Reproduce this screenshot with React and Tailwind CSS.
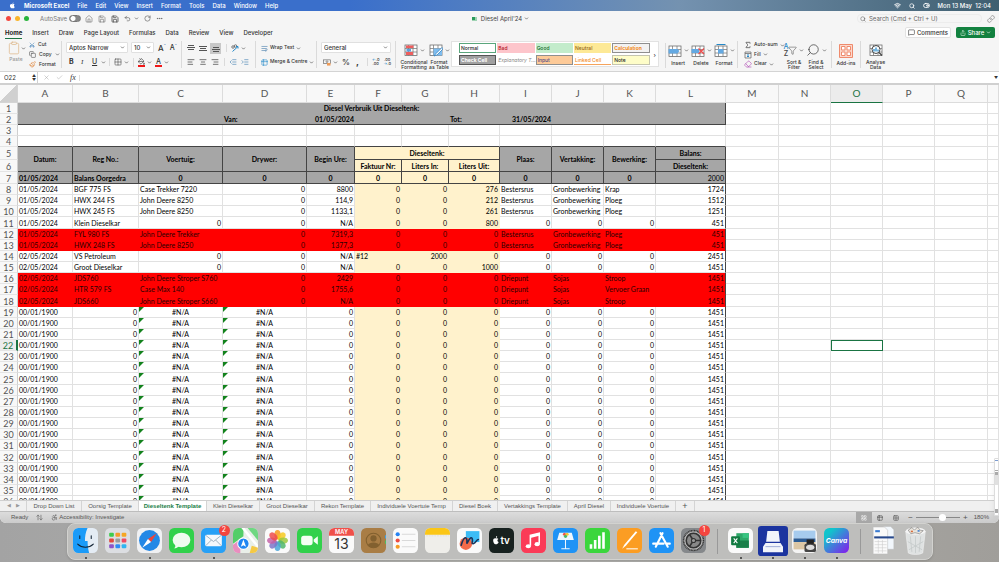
import { useState } from 'react';
import {
  ArrowUpDown, Accessibility, ChevronDown, Clipboard, Copy, Ellipsis, Eraser, Grid2x2, House,
  IndentDecrease, IndentIncrease, LayoutGrid, MessageSquare, PaintBucket, Paintbrush, RotateCw,
  Save, Scissors, Search, Share, Sigma, Table2, TextAlignCenter, TextAlignEnd, TextAlignStart, Undo2,
  Wifi, WrapText, X, Check, Funnel, ToggleRight, Link,
} from 'lucide-react';

const COLS = [
  ['A', 'w-[55px]'], ['B', 'w-[66px]'], ['C', 'w-[84px]'], ['D', 'w-[84px]'], ['E', 'w-[48px]'],
  ['F', 'w-[47px]'], ['G', 'w-[47px]'], ['H', 'w-[51px]'], ['I', 'w-[52px]'], ['J', 'w-[52px]'],
  ['K', 'w-[52px]'], ['L', 'w-[70px]'], ['M', 'w-[53px]'], ['N', 'w-[52px]'], ['O', 'w-[52px]'],
  ['P', 'w-[52px]'], ['Q', 'w-[53px]'], ['', ''],
];

const ENTRIES = [
  ['01/05/2024', 'BGF 775 FS', 'Case Trekker 7220', '0', '8800', '0', '0', '276', 'Bestersrus', 'Gronbewerking', 'Krap', '1724'],
  ['01/05/2024', 'HWX 244 FS', 'John Deere 8250', '0', '114,9', '0', '0', '212', 'Bestersrus', 'Gronbewerking', 'Ploeg', '1512'],
  ['01/05/2024', 'HWX 245 FS', 'John Deere 8250', '0', '1133,1', '0', '0', '261', 'Bestersrus', 'Gronbewerking', 'Ploeg', '1251'],
  ['01/05/2024', 'Klein Dieselkar', '0', '0', 'N/A', '0', '0', '800', '0', '0', '0', '451'],
  ['01/05/2024', 'FYL 980 FS', 'John Deere Trekker', '0', '7319,3', '0', '0', '0', 'Bestersrus', 'Gronbewerking', 'Ploeg', '451'],
  ['01/05/2024', 'HWX 248 FS', 'John Deere 8250', '0', '1377,3', '0', '0', '0', 'Bestersrus', 'Gronbewerking', 'Ploeg', '451'],
  ['02/05/2024', 'VS Petroleum', '0', '0', 'N/A', '#12', '2000', '0', '0', '0', '0', '2451'],
  ['02/05/2024', 'Groot Dieselkar', '0', '0', 'N/A', '0', '0', '1000', '0', '0', '0', '1451'],
  ['02/05/2024', 'JDS760', 'John Deere Stroper S760', '0', '2429', '0', '0', '0', 'Driepunt', 'Sojas', 'Stroop', '1451'],
  ['02/05/2024', 'HTR 579 FS', 'Case Max 140', '0', '1755,6', '0', '0', '0', 'Driepunt', 'Sojas', 'Vervoer Graan', '1451'],
  ['02/05/2024', 'JDS660', 'John Deere Stroper S660', '0', 'N/A', '0', '0', '0', 'Driepunt', 'Sojas', 'Stroop', '1451'],
];
const EMPTY = ['00/01/1900', '0', '#N/A', '#N/A', '0', '0', '0', '0', '0', '0', '0', '1451'];
const ROWS = [...ENTRIES, ...Array.from({ length: 18 }, () => EMPTY)];
const RED_ROWS = [12, 13, 16, 17, 18];

const SHEETS = [
  ['Drop Down List', 'w-[55px]'], ['Oorsig Template', 'w-[57px]'], ['Dieseltenk Template', 'w-[68px]'],
  ['Klein Dieselkar', 'w-[53px]'], ['Groot Dieselkar', 'w-[55px]'], ['Rekon Template', 'w-[56px]'],
  ['Individuele Voertuie Temp', 'w-[82px]'], ['Diesel Boek', 'w-[45px]'], ['Vertakkings Template', 'w-[70px]'],
  ['April Diesel', 'w-[43px]'], ['Individuele Voertuie', 'w-[65px]'],
];

const Chev = () => <ChevronDown size={5} strokeWidth={3} className="shrink-0 text-[#444]" />;

const MenuBar = () => (
  <header className="flex h-[11px] shrink-0 items-center bg-linear-to-r from-[#3a6fcb] from-35% via-[#7492b0] via-68% to-[#3f5f70] pr-2 pl-[9px] text-[6px] font-medium text-white">
    <svg viewBox="0 0 24 24" className="mr-2 size-[7px]" fill="currentColor">
      <path d="M17 12.500c0-2.600 2.100-3.900 2.200-4-1.200-1.800-3.100-2-3.700-2-1.600-.2-3.100.9-3.900.9s-2-.9-3.300-.9C6.500 6.600 5 7.500 4.100 9c-1.800 3.100-.5 7.700 1.300 10.200.9 1.200 1.900 2.600 3.200 2.600 1.300-.1 1.800-.8 3.300-.8s2 .8 3.300.8c1.400 0 2.300-1.200 3.100-2.500 1-1.400 1.400-2.800 1.400-2.900 0 0-2.700-1-2.700-3.900zM14.600 4.900c.7-.8 1.200-2 1-3.200-1 .1-2.300.7-3 1.500-.7.8-1.200 2-1.100 3.100 1.200.1 2.400-.6 3.100-1.400z" />
    </svg>
    <nav className="flex flex-1 gap-2">
      {['Microsoft Excel', 'File', 'Edit', 'View', 'Insert', 'Format', 'Tools', 'Data', 'Window', 'Help'].map((item, i) => (
        <button key={item} className={i === 0 ? 'font-bold' : ''}>{item}</button>
      ))}
    </nav>
    <div className="flex items-center gap-2">
      <Wifi size={7} strokeWidth={3} />
      <Search size={6} strokeWidth={3} />
      <ToggleRight size={7} strokeWidth={3} />
      <span>Mon 13 May&nbsp; 12:04</span>
    </div>
  </header>
);

const TitleBar = () => (
  <div className="flex h-[15px] shrink-0 items-center text-[#555]">
    <div className="flex flex-1 items-center pl-[6px]">
      <span className="size-[5px] rounded-full bg-[#f4483f]" />
      <span className="ml-1 size-[5px] rounded-full bg-[#f9b52b]" />
      <span className="ml-1 size-[5px] rounded-full bg-[#29b43c]" />
      <label htmlFor="autosave" className="ml-[11px] text-[6px] text-[#777]">AutoSave</label>
      <input
        id="autosave"
        type="checkbox"
        className="ml-[2px] h-[7px] w-3 appearance-none rounded-full border border-[#777] bg-[radial-gradient(circle_at_3px_50%,white_2px,#888_3px)]"
      />
      <div className="ml-1 flex items-center gap-[5px]">
        <button aria-label="Home"><House size={8} strokeWidth={1.5} /></button>
        <button aria-label="Save"><Save size={8} strokeWidth={1.5} /></button>
        <button aria-label="Save as"><Save size={8} strokeWidth={2.5} /></button>
        <button aria-label="Undo" className="flex items-center gap-[3px]"><Undo2 size={7} strokeWidth={2} /><Chev /></button>
        <button aria-label="Redo"><RotateCw size={7} strokeWidth={2} /></button>
        <button aria-label="More"><Ellipsis size={7} strokeWidth={2} /></button>
      </div>
    </div>
    <button className="flex items-center gap-[2px] text-[6px] text-[#444]">
      <span className="mr-[2px] flex h-1 w-[5px] items-center bg-[#9fd3b3]"><span className="size-[3px] bg-[#2a9a5a]" /></span>
      Diesel April'24 <Chev />
    </button>
    <div className="flex flex-1 items-center justify-end gap-[5px] pr-1">
      <div className="flex h-[9px] w-[125px] items-center gap-[3px] rounded-sm border border-[#ececec] px-[2px]">
        <Search size={6} strokeWidth={2} className="shrink-0" />
        <input
          aria-label="Search"
          placeholder="Search (Cmd + Ctrl + U)"
          className="w-full bg-transparent text-[6px] outline-none placeholder:text-[#666]"
        />
      </div>
      <Link size={8} strokeWidth={1.5} />
    </div>
  </div>
);

const TabsRow = () => (
  <div className="flex h-[13px] shrink-0 items-center justify-between pr-1 pl-[5px] text-[6px] text-[#333]">
    <nav className="flex h-full items-center gap-[10px]">
      {['Home', 'Insert', 'Draw', 'Page Layout', 'Formulas', 'Data', 'Review', 'View', 'Developer'].map((tab) => (
        <button
          key={tab}
          className={tab === 'Home' ? 'border-b border-[#1a7443] py-px font-bold text-[#222]' : 'border-b border-transparent py-px font-medium'}
        >
          {tab}
        </button>
      ))}
    </nav>
    <div className="flex items-center gap-[5px] font-medium">
      <button className="flex h-[11px] w-[46px] items-center justify-center gap-[2px] rounded-[2px] border border-[#e2e2e2] bg-white">
        <MessageSquare size={7} strokeWidth={2} /> Comments
      </button>
      <button className="flex h-[11px] w-[39px] items-center justify-center gap-[2px] rounded-[2px] bg-[#12813f] text-white">
        <Share size={6} strokeWidth={2} /> Share <ChevronDown size={5} strokeWidth={3} />
      </button>
    </div>
  </div>
);

const Drop = ({ label, value, width }) => (
  <div className={`flex h-[11px] items-center rounded-[1px] border border-[#e0e0e0] bg-white pr-[2px] ${width}`}>
    <select aria-label={label} className="h-full w-full appearance-none bg-transparent pl-[2px] text-[6px] text-[#333] outline-none">
      <option>{value}</option>
    </select>
    <Chev />
  </div>
);

const GridIcon = ({ children }) => (
  <svg viewBox="0 0 28 28" className="h-[14px] w-[14px] shrink-0" fill="none">
    <rect x="2" y="4" width="24" height="21" fill="#fff" stroke="#666" strokeWidth="1.500" />
    <path d="M2 11h24M2 18h24M9 4v21M18 4v21" stroke="#777" strokeWidth="1.500" />
    {children}
  </svg>
);

const VAlign = ({ d }) => (
  <svg viewBox="0 0 8 9" className="h-[9px] w-2" fill="none" stroke="#555">
    <path d={d} />
  </svg>
);

const BigButton = ({ icon, lines, width, chevron = true }) => (
  <button className={`flex shrink-0 flex-col items-center text-[5px] leading-[5px] font-medium text-[#333] ${width}`}>
    <span className="mb-[3px] flex h-[15px] items-center gap-[2px]">
      {icon}
      {chevron && <Chev />}
    </span>
    {lines.map((line) => <span key={line} className="whitespace-nowrap">{line}</span>)}
  </button>
);

const STYLES = [
  ['Normal', 'border border-[#5aa67c] bg-white text-[#222]'],
  ['Bad', 'bg-[#fdc5cb] text-[#b0101c]'],
  ['Good', 'bg-[#c3eccb] text-[#12692a]'],
  ['Neutral', 'bg-[#fde996] text-[#94651a]'],
  ['Calculation', 'border border-[#8f8f8f] bg-[#f2f2f2] font-bold text-[#f28a1c]'],
  ['Check Cell', 'border border-[#555] bg-[#a0a0a0] font-bold text-white'],
  ['Explanatory T...', 'font-normal text-[#888] italic'],
  ['Input', 'border border-[#8f8f8f] bg-[#fdca98] text-[#4d4d86]'],
  ['Linked Cell', 'border-b border-[#f5a35c] text-[#f28a1c]'],
  ['Note', 'border border-[#c5c5b0] bg-[#fefdc8] text-[#222]'],
];

const Ribbon = () => (
  <div className="flex h-[33px] shrink-0 overflow-hidden border-b border-[#d4d4d4] pt-[2px] pb-[3px] text-[5px] font-medium text-[#333] [&_svg]:shrink-0">
    <div className="flex w-[62px] shrink-0 gap-1 border-r border-[#dadada] pl-[7px]">
      <button className="flex w-[18px] flex-col items-center gap-px text-[#999]">
        <span className="flex items-center"><Clipboard size={14} strokeWidth={1.3} className="text-[#dfb98c]" /><Chev /></span>
        Paste
      </button>
      <div className="flex flex-col justify-between">
        <button className="flex items-center gap-[3px]"><Scissors size={6} strokeWidth={2} className="-rotate-90 text-[#3c7fb5]" />Cut</button>
        <button className="flex items-center gap-[3px]"><Copy size={7} strokeWidth={1.7} />Copy <Chev /></button>
        <button className="flex items-center gap-[3px]"><Paintbrush size={7} strokeWidth={2} className="text-[#e0863b]" />Format</button>
      </div>
    </div>

    <div className="flex w-[120px] shrink-0 flex-col justify-between border-r border-[#dadada] pt-px pl-1">
      <div className="flex items-center gap-[3px]">
        <Drop label="Font" value="Aptos Narrow" width="w-[62px]" />
        <Drop label="Font size" value="10" width="w-[23px]" />
        <button aria-label="Increase font size" className="ml-px flex text-[8px] leading-[8px]">A<span className="text-[5px] leading-[5px] text-[#2a6fb0]">ˆ</span></button>
        <button aria-label="Decrease font size" className="ml-px flex text-[7px] leading-[8px]">A<span className="text-[5px] leading-[5px] text-[#2a6fb0]">ˇ</span></button>
      </div>
      <div className="flex h-3 items-center pl-[3px] text-[7px]">
        <button aria-label="Bold" className="w-3 text-left font-bold">B</button>
        <button aria-label="Italic" className="w-[11px] text-left font-serif italic">I</button>
        <button aria-label="Underline" className="flex w-[14px] items-center justify-between"><u>U</u><Chev /></button>
        <button aria-label="Borders" className="ml-[3px] flex items-center gap-[2px] border-l border-[#dadada] pl-1"><Grid2x2 size={8} strokeWidth={1.5} /><Chev /></button>
        <button aria-label="Fill colour" className="ml-1 flex items-center gap-[2px] border-l border-[#dadada] pl-1">
          <span className="border-b-2 border-[#f01818]"><PaintBucket size={7} strokeWidth={2} /></span><Chev />
        </button>
        <button aria-label="Font colour" className="ml-[3px] flex items-center gap-[2px]">
          <span className="border-b-2 border-[#f01818] px-px leading-[7px]">A</span><Chev />
        </button>
      </div>
    </div>

    <div className="flex w-[74px] shrink-0 flex-col justify-between border-r border-[#dadada] pt-px pl-[5px]">
      <div className="flex h-3 items-center gap-[4px]">
        <button aria-label="Top align"><VAlign d="M1 1.500h6M0 3.500h8M1 5.500h6" /></button>
        <button aria-label="Middle align"><VAlign d="M0 2.500h8M1 4.500h6M0 6.500h8" /></button>
        <button aria-label="Bottom align" className="-ml-px flex size-[11px] items-center justify-center bg-[#c8c8c8]"><VAlign d="M1 3.500h6M0 5.500h8M1 7.500h6" /></button>
        <button aria-label="Orientation" className="ml-px flex items-center gap-[2px] border-l border-[#dadada] pl-1">
          <svg viewBox="0 0 16 16" className="size-[8px]" fill="none">
            <circle cx="4" cy="6" r="2.500" stroke="#555" strokeWidth="1.500" />
            <circle cx="9" cy="4" r="2.500" stroke="#555" strokeWidth="1.500" />
            <path d="M3 15 14 5M14 5h-4M14 5v4" stroke="#2589c9" strokeWidth="2" />
          </svg>
          <Chev />
        </button>
      </div>
      <div className="flex h-3 items-center gap-[4px]">
        <button aria-label="Align left"><TextAlignStart size={8} strokeWidth={2} /></button>
        <button aria-label="Centre"><TextAlignCenter size={8} strokeWidth={2} /></button>
        <button aria-label="Align right"><TextAlignEnd size={8} strokeWidth={2} /></button>
        <span className="ml-px flex gap-1 border-l border-[#dadada] pl-1">
          <button aria-label="Decrease indent"><IndentDecrease size={8} strokeWidth={2} className="text-[#4f88b5]" /></button>
          <button aria-label="Increase indent"><IndentIncrease size={8} strokeWidth={2} className="text-[#4f88b5]" /></button>
        </span>
      </div>
    </div>

    <div className="flex w-[61px] shrink-0 flex-col justify-between border-r border-[#dadada] pt-px pl-[5px]">
      <button className="flex h-3 items-center gap-[2px]"><WrapText size={7} strokeWidth={2} className="text-[#4078a8]" />Wrap Text <Chev /></button>
      <button className="flex h-3 items-center gap-[2px] whitespace-nowrap"><Table2 size={7} strokeWidth={2} className="text-[#2589c9]" />Merge &amp; Centre <Chev /></button>
    </div>

    <div className="flex w-[79px] shrink-0 flex-col justify-between border-r border-[#dadada] pt-px pl-1">
      <Drop label="Number format" value="General" width="w-[70px]" />
      <div className="flex h-3 items-center pl-[2px]">
        <button aria-label="Accounting" className="flex items-center gap-[2px]">
          <svg viewBox="0 0 18 16" className="h-[7px] w-[8px]" fill="none">
            <rect x="1" y="2" width="16" height="8" stroke="#666" strokeWidth="1.500" />
            <circle cx="9" cy="6" r="2" stroke="#666" strokeWidth="1.500" />
            <rect x="9" y="9" width="8" height="6" fill="#ee9a56" />
          </svg>
          <Chev />
        </button>
        <button className="ml-1 text-[8px]">%</button>
        <button className="ml-[6px] text-[9px] font-bold">,</button>
        <button className="ml-2 border-l border-[#dadada] pl-1 text-[4px] leading-[4px]"><span className="text-[#2589c9]">←</span>.0<br />.00</button>
        <button className="ml-1 text-[4px] leading-[4px]">.00<br /><span className="text-[#2589c9]">→</span>.0</button>
      </div>
    </div>

    <div className="flex w-[55px] shrink-0 pt-[2px] pl-[4px]">
      <BigButton
        width="w-7"
        lines={['Conditional', 'Formatting']}
        icon={<GridIcon><path d="M4 5h15v5H4zM4 18h14v6H4z" fill="#ee5e5e" /><path d="M5 12h9v5H5z" fill="#5c9ede" /></GridIcon>}
      />
      <BigButton
        width="w-[22px]"
        lines={['Format', 'as Table']}
        icon={<GridIcon><path d="M9 11h17v14H9z" fill="#7ebdf0" /><path d="M26 9 14 21l-4 5 6-2 12-12z" fill="#fff" stroke="#2b7fc0" strokeWidth="1.500" /></GridIcon>}
      />
    </div>

    <div className="flex h-[26px] w-[208px] shrink-0 items-center gap-1 border border-[#e2e2e2] bg-white px-[7px]">
      <div className="grid flex-1 grid-cols-5 gap-x-px gap-y-[2px]">
        {STYLES.map(([name, cls]) => (
          <button key={name} className={`h-[10px] pl-px text-left leading-[8px] whitespace-nowrap ${cls}`}>{name}</button>
        ))}
      </div>
      <button aria-label="More styles" className="-mr-[5px] text-[6px]">›</button>
    </div>

    <div className="flex w-[79px] shrink-0 border-r border-[#dadada] pt-[2px] pl-[6px]">
      <div className="flex border-l border-[#dadada]">
        <BigButton width="w-6" lines={['Insert']} icon={<GridIcon><path d="M1 10h18l4 4-4 5H1z" fill="#64a9e2" /></GridIcon>} />
        <BigButton width="w-[22px]" lines={['Delete']} icon={<GridIcon><path d="M1 10h15v8H1z" fill="#64a9e2" /><path d="m15 9 11 11M26 9 15 20" stroke="#ee4d4d" strokeWidth="2.500" /></GridIcon>} />
        <BigButton width="w-6" lines={['Format']} icon={<GridIcon><path d="M8 10h11v9H8z" fill="#64a9e2" /><path d="M5 1h18" stroke="#2589c9" strokeWidth="2" /></GridIcon>} />
      </div>
    </div>

    <div className="flex w-[94px] shrink-0 border-r border-[#dadada] pl-[6px]">
      <div className="flex w-[39px] flex-col justify-between whitespace-nowrap">
        <button className="flex items-center gap-[2px]"><Sigma size={8} strokeWidth={2} />Auto-sum <Chev /></button>
        <button className="flex items-center gap-[2px]">
          <svg viewBox="0 0 16 16" className="size-[8px]" fill="none">
            <path d="M2 2h12v12H2zM2 5h12" stroke="#666" strokeWidth="1.500" />
            <path d="M8 6v6m-2-2 2 2 2-2" stroke="#2589c9" strokeWidth="2" />
          </svg>
          Fill <Chev />
        </button>
        <button className="flex items-center gap-[2px]"><Eraser size={8} strokeWidth={2} className="text-[#b455b8]" />Clear <Chev /></button>
      </div>
      <div className="flex pt-[2px]">
        <BigButton
          width="w-[22px]"
          lines={['Sort &', 'Filter']}
          icon={<span className="flex items-center text-[7px] leading-[7px] text-[#2589c9]"><span className="flex flex-col"><span>A</span><span className="text-[#444]">Z</span></span><Funnel size={9} strokeWidth={1.5} className="text-[#555]" /></span>}
        />
        <BigButton width="w-[22px]" lines={['Find &', 'Select']} icon={<Search size={14} strokeWidth={1.2} className="-scale-x-100" />} />
      </div>
    </div>

    <div className="flex w-[29px] shrink-0 justify-center border-r border-[#dadada] pt-[2px]">
      <BigButton
        width="w-5"
        chevron={false}
        lines={['Add-ins']}
        icon={
          <svg viewBox="0 0 28 28" className="size-[14px]" fill="none" stroke="#ef8a6c" strokeWidth="2">
            <path d="M1 1h26v26H1z" fill="#fbd9cd" />
            <path d="M5 5h7v7H5zM16 5h7v7h-7zM5 16h7v7H5zM16 16h7v7h-7z" fill="#fff" />
          </svg>
        }
      />
    </div>
    <div className="flex w-[29px] shrink-0 justify-center pt-[2px]">
      <BigButton
        width="w-6"
        chevron={false}
        lines={['Analyse', 'Data']}
        icon={<GridIcon><circle cx="14" cy="13" r="8" fill="#fff" stroke="#444" strokeWidth="2" /><path d="M10 17v-5M14 17V9M18 17v-4" stroke="#2589c9" strokeWidth="2.500" /><path d="m20 19 6 6" stroke="#444" strokeWidth="2.500" /></GridIcon>}
      />
    </div>
  </div>
);

const FormulaBar = () => (
  <div className="flex h-[13px] shrink-0 items-center border-b-2 border-[#d0d0d0] bg-white text-[6px] text-[#333]">
    <div className="flex h-full w-[38px] items-center border-r border-[#d0d0d0] pr-px">
      <input aria-label="Name box" defaultValue="O22" className="w-full pl-1 outline-none" />
      <span className="text-[4px] leading-[4px]">▲<br />▼</span>
    </div>
    <X size={7} strokeWidth={1.5} className="ml-[5px] text-[#999]" />
    <Check size={7} strokeWidth={1.5} className="ml-[6px] text-[#999]" />
    <span className="ml-[7px] font-['Liberation_Serif',serif] text-[8px] italic">fx</span>
    <input aria-label="Formula" className="ml-[3px] h-[6px] flex-1 border-l border-[#ddd] outline-none" />
    <span className="mr-px text-[4px]">▼</span>
  </div>
);

const RowHead = ({ n }) => (
  <th
    scope="row"
    className={`border-b border-[#e4e4e4] text-center text-[9px] font-normal ${
      n === 22 ? 'border-r-2 border-r-[#1a7443] bg-[#ececec] text-[#1a7443]' : 'border-r border-r-[#cfcfcf] bg-[#f8f8f8] text-[#555]'
    }`}
  >
    {n}
  </th>
);

// blank cells to the right of the report
const Blanks = ({ n }) =>
  COLS.slice(12).map(([name], i) => (
    <td
      key={i}
      className={n === 22 && name === 'O' ? 'bg-white outline outline-1 -outline-offset-1 outline-[#1a7443]' : 'border-r border-b border-[#e1e1e1] bg-white'}
    />
  ));

const HEAD = 'border-r border-b border-[#444] text-center font-bold whitespace-nowrap';

const dataCell = (n, c, value) => {
  const text = /[A-Za-z]{2}|^#12|\/\d/.test(value);
  let cls = 'border-r border-b px-px whitespace-nowrap ';
  if (value === '#N/A') cls += 'bg-[linear-gradient(135deg,#12821c_3px,transparent_4px)] text-center ';
  else cls += text ? 'text-left ' : 'text-right ';
  if (c === 11) cls += 'border-r-[#444] ';
  if (RED_ROWS.includes(n)) return cls + (c === 11 ? 'border-b-[#ff0000] ' : 'border-[#ff0000] ') + 'bg-[#ff0000] text-[#2a0000]';
  if (c >= 5 && c <= 7) return cls + 'border-[#fff2cc] bg-[#fff2cc]';
  return cls + (c === 11 ? 'border-b-[#e1e1e1]' : 'border-[#e1e1e1]');
};

const Sheet = () => (
  <div className="min-h-0 flex-1 overflow-hidden bg-white">
    <table className="w-full table-fixed border-separate border-spacing-0 font-[Lato,'Open_Sans',sans-serif] text-[7px] leading-[9px] text-black [&_tbody_td]:pt-px [&_tbody_td]:pb-0 [&_tbody_th]:px-0 [&_tbody_th]:pt-px [&_tbody_th]:pb-0">
      <colgroup>
        <col className="w-[18px]" />
        {COLS.map(([name, width]) => <col key={name} className={width} />)}
      </colgroup>
      <thead>
        <tr className="h-[18px] text-[10px]">
          <th aria-label="Select all" className="border-r border-b border-[#d4d4d4] bg-[linear-gradient(135deg,#f8f8f8_50%,#d0d0d0_50%)] p-0" />
          {COLS.map(([name]) => (
            <th
              key={name}
              scope="col"
              className={`border-r border-b border-[#dcdcdc] p-0 font-normal ${name === 'O' ? 'border-b-[#1a7443] bg-[#ececec] text-[#1a7443]' : 'bg-[#f8f8f8] text-[#555]'}`}
            >
              {name}
            </th>
          ))}
        </tr>
      </thead>
      <tbody>
        <tr className="h-[11px]">
          <RowHead n={1} />
          <td colSpan={12} className="border-r border-b border-[#444] border-b-[#a6a6a6] bg-[#a6a6a6] text-center font-bold">Diesel Verbruik Uit Dieseltenk:</td>
          <Blanks n={1} />
        </tr>
        <tr className="h-[11px] font-bold [&>td:nth-child(-n+13)]:border-b [&>td:nth-child(-n+13)]:border-[#444] [&>td:nth-child(-n+13)]:bg-[#a6a6a6]">
          <RowHead n={2} />
          <td /><td /><td />
          <td className="px-px">Van:</td>
          <td className="px-px text-right">01/05/2024</td>
          <td /><td />
          <td className="px-px">Tot:</td>
          <td className="px-px text-right">31/05/2024</td>
          <td /><td />
          <td className="border-r" />
          <Blanks n={2} />
        </tr>
        {[3, 4].map((n) => (
          <tr key={n} className="h-[11px]">
            <RowHead n={n} />
            {COLS.slice(0, 12).map(([name]) => (
              <td key={name} className={n === 4 ? 'border-r border-b border-[#e1e1e1] border-b-[#444]' : 'border-r border-b border-[#e1e1e1]'} />
            ))}
            <Blanks n={n} />
          </tr>
        ))}
        <tr className="h-[13px]">
          <RowHead n={5} />
          {['Datum:', 'Reg No.:', 'Voertuig:', 'Drywer:', 'Begin Ure:'].map((t) => (
            <td key={t} rowSpan={2} className={`${HEAD} bg-[#a6a6a6]`}>{t}</td>
          ))}
          <td colSpan={3} className={`${HEAD} bg-[#fff2cc]`}>Dieseltenk:</td>
          {['Plaas:', 'Vertakking:', 'Bewerking:'].map((t) => (
            <td key={t} rowSpan={2} className={`${HEAD} bg-[#a6a6a6]`}>{t}</td>
          ))}
          <td className={`${HEAD} bg-[#a6a6a6]`}>Balans:</td>
          <Blanks n={5} />
        </tr>
        <tr className="h-3">
          <RowHead n={6} />
          {['Faktuur Nr:', 'Liters In:', 'Liters Uit:'].map((t) => (
            <td key={t} className={`${HEAD} bg-[#fff2cc]`}>{t}</td>
          ))}
          <td className={`${HEAD} bg-[#a6a6a6]`}>Dieseltenk:</td>
          <Blanks n={6} />
        </tr>
        <tr className="h-3">
          <RowHead n={7} />
          <td className="border-r border-b border-[#444] bg-[#a6a6a6] px-px font-bold">01/05/2024</td>
          <td className="border-r border-b border-[#444] bg-[#a6a6a6] px-px font-bold whitespace-nowrap">Balans Oorgedra</td>
          {COLS.slice(2, 11).map(([name], i) => (
            <td key={name} className={i >= 3 && i <= 5 ? `${HEAD} bg-[#fff2cc]` : `${HEAD} bg-[#a6a6a6]`}>0</td>
          ))}
          <td className="border-r border-b border-[#444] bg-[#a6a6a6] px-px text-right">2000</td>
          <Blanks n={7} />
        </tr>
        {ROWS.map((row, i) => {
          const n = i + 8;
          return (
            <tr key={n} className={n % 7 === 4 ? 'h-3' : 'h-[11px]'}>
              <RowHead n={n} />
              {row.map((value, c) => <td key={c} className={dataCell(n, c, value)}>{value}</td>)}
              <Blanks n={n} />
            </tr>
          );
        })}
      </tbody>
    </table>
  </div>
);

const SheetTabs = ({ active, onSelect }) => (
  <nav className="flex h-[11px] shrink-0 items-stretch border-t border-[#cfcfcf] bg-[#f0f0f0] font-['Liberation_Sans',sans-serif] text-[6px] text-[#555]">
    <div className="flex w-[27px] shrink-0 items-center justify-center gap-[5px] border-r border-[#d4d4d4] text-[5px] text-[#999]">
      <button aria-label="Previous sheet">◀</button>
      <button aria-label="Next sheet">▶</button>
    </div>
    {SHEETS.map(([name, width]) => (
      <button
        key={name}
        onClick={() => onSelect(name)}
        className={`border-r border-[#d4d4d4] whitespace-nowrap ${width} ${name === active ? 'bg-white font-bold text-[#1a8048]' : ''}`}
      >
        {name}
      </button>
    ))}
    <button aria-label="Add sheet" className="w-[19px] border-r border-[#d4d4d4] text-[9px] leading-[9px]">+</button>
  </nav>
);

const StatusBar = () => (
  <footer className="flex h-3 shrink-0 items-center justify-between border-t border-[#bdbdbd] bg-linear-to-b from-[#dcdcdc] to-[#cbcbcb] pr-[10px] pl-[11px] font-['Liberation_Sans',sans-serif] text-[6px] text-[#555]">
    <div className="flex items-center">
      <span>Ready</span>
      <ArrowUpDown size={7} strokeWidth={2} className="ml-2" />
      <Accessibility size={7} strokeWidth={2} className="ml-2" />
      <span className="ml-px">Accessibility: Investigate</span>
    </div>
    <div className="flex h-full items-center">
      <button aria-label="Normal view" className="flex h-full w-4 items-center justify-center bg-[#a8a8a8] text-white"><LayoutGrid size={6} /></button>
      <button aria-label="Page layout" className="flex w-4 justify-center"><Table2 size={6} strokeWidth={2.5} /></button>
      <button aria-label="Page break" className="flex w-4 justify-center"><Grid2x2 size={6} strokeWidth={2.5} /></button>
      <button className="ml-1 text-[8px]">−</button>
      <input
        type="range"
        aria-label="Zoom"
        defaultValue="62"
        className="mx-[3px] h-px w-[44px] appearance-none bg-[#888] [&::-webkit-slider-thumb]:size-[7px] [&::-webkit-slider-thumb]:appearance-none [&::-webkit-slider-thumb]:rounded-full [&::-webkit-slider-thumb]:bg-white"
      />
      <button className="text-[8px]">+</button>
      <span className="ml-[6px]">180%</span>
    </div>
  </footer>
);

const Tile = ({ bg, children }) => (
  <svg viewBox="0 0 48 48" className="size-[25px]">
    <rect width="48" height="48" rx="10" fill={bg} />
    {children}
  </svg>
);

const PETALS = ['#f79a1d', '#f6c920', '#9cc83c', '#4fb66b', '#4aa5d8', '#7c74c8', '#c462a8', '#ee4c4c'];
const LAUNCH = ['#3ecb4c', '#f39c2b', '#f5a623', '#e2483e', '#9b9b9b', '#ef4a63', '#8e55c8', '#2f8df5', '#2fb5f0'];

const DOCK = [
  ['Finder', true, (
    <Tile bg="#e4ecf4">
      <path d="M10 0h18c-4 8-5 17-5 25h5c0 8 1 15 3 23H10A10 10 0 0 1 0 38V10A10 10 0 0 1 10 0z" fill="#1b9bf8" />
      <path d="M13 15v5M35 15v5M9 31c8 8 22 8 30 0" stroke="#123" strokeWidth="2" fill="none" strokeLinecap="round" />
    </Tile>
  )],
  ['Launchpad', false, (
    <Tile bg="#dcdee2">
      {LAUNCH.map((c, i) => <rect key={i} x={8 + (i % 3) * 12} y={9 + Math.floor(i / 3) * 11} width="9" height="8" rx="2" fill={c} />)}
    </Tile>
  )],
  ['Safari', true, (
    <Tile bg="#f0f1f3">
      <circle cx="24" cy="24" r="20" fill="#2388e6" />
      <path d="M38 10 27 27l-6-6z" fill="#f04438" />
      <path d="M10 38l17-11-6-6z" fill="#fff" />
    </Tile>
  )],
  ['Messages', false, (
    <Tile bg="#31d14b">
      <ellipse cx="24" cy="23" rx="17" ry="14" fill="#effbef" />
      <path d="M12 32c1 4-1 6-3 7 5 0 8-2 10-4z" fill="#effbef" />
    </Tile>
  )],
  ['Mail', true, (
    <Tile bg="#27a0f6">
      <rect x="8" y="13" width="32" height="22" rx="3" fill="#f4f8fc" />
      <path d="m9 14 15 12 15-12M9 34l11-11M39 34 28 23" stroke="#8ba0b2" strokeWidth="1.500" fill="none" />
    </Tile>
  ), '2'],
  ['Maps', false, (
    <Tile bg="#e9efe9">
      <path d="M10 0h10v16L0 30V10A10 10 0 0 1 10 0z" fill="#54ce68" />
      <path d="M28 0h10a10 10 0 0 1 10 10v14z" fill="#6fd782" />
      <path d="M0 32l14-10v26h-4A10 10 0 0 1 0 38z" fill="#e98dbf" />
      <path d="M22 0l26 32v8L16 0z" fill="#fff" />
      <path d="M36 34l12 4a10 10 0 0 1-10 10h-6z" fill="#f5c944" />
      <circle cx="20" cy="30" r="11" fill="#1f86f2" stroke="#fff" strokeWidth="2" />
      <path d="m20 22 5 14-5-3-5 3z" fill="#fff" />
    </Tile>
  )],
  ['Photos', false, (
    <Tile bg="#fafafa">
      {PETALS.map((c, i) => <ellipse key={c} cx="24" cy="13" rx="6" ry="9" fill={c} opacity="0.85" transform={`rotate(${i * 45} 24 24)`} />)}
    </Tile>
  )],
  ['FaceTime', false, (
    <Tile bg="#31d14b">
      <rect x="8" y="15" width="22" height="18" rx="5" fill="#f4fff4" />
      <path d="m32 22 8-6v16l-8-6z" fill="#f4fff4" />
    </Tile>
  )],
  ['Calendar', false, (
    <Tile bg="#fafafa">
      <path d="M10 0h28a10 10 0 0 1 10 10v5H0v-5A10 10 0 0 1 10 0z" fill="#f0504a" />
      <text x="24" y="12" textAnchor="middle" fontSize="11" fontWeight="600" fill="#fff">MAY</text>
      <text x="24" y="41" textAnchor="middle" fontSize="27" fill="#333">13</text>
    </Tile>
  )],
  ['Contacts', false, (
    <Tile bg="#a97d45">
      <path d="M46 14h3v6h-3z" fill="#3fa3e8" />
      <path d="M46 24h3v6h-3z" fill="#49c05e" />
      <circle cx="24" cy="24" r="14" fill="none" stroke="#82602f" strokeWidth="2" />
      <circle cx="24" cy="20" r="6" fill="#82602f" />
      <path d="M13 33c3-7 19-7 22 0-6 6-16 6-22 0z" fill="#82602f" />
    </Tile>
  )],
  ['Reminders', false, (
    <Tile bg="#fafafa">
      <circle cx="9" cy="12" r="4" fill="#2583f4" />
      <circle cx="9" cy="24" r="4" fill="#ee4b40" />
      <circle cx="9" cy="36" r="4" fill="#f59a23" />
      <path d="M17 12h26M17 24h26M17 36h26" stroke="#cfcfcf" strokeWidth="1.500" />
    </Tile>
  )],
  ['Notes', false, (
    <Tile bg="#efeeea">
      <path d="M10 0h28a10 10 0 0 1 10 10v3H0v-3A10 10 0 0 1 10 0z" fill="#fbc616" />
      <path d="M2 15h44" stroke="#bbb" strokeDasharray="1 2" />
    </Tile>
  )],
  ['Freeform', false, (
    <Tile bg="#fafafa">
      <rect x="17" y="6" width="26" height="21" fill="#3cbcf6" />
      <circle cx="17" cy="30" r="12" fill="#f36b4a" />
      <path d="M8 33c6-20 12-16 11-6-1 9 6-14 10-7 3 6-3 10 2 10 6-1 6-8 10-8" stroke="#17345c" strokeWidth="3" fill="none" strokeLinecap="round" />
    </Tile>
  )],
  ['TV', false, (
    <Tile bg="#17211f">
      <path d="M14 19c1-1 2-2 1.500-3.500-1.500 0-2.500 1.500-2 3.500zM8 24c0-4 3-5 5.500-4 2-1 4 0 4.500 1-3 2-2 5 .5 6-1 3-3 5-5 4-3 1-5.500-3-5.500-7z" fill="#fff" />
      <text x="31" y="31" textAnchor="middle" fontSize="19" fontWeight="600" fill="#fff">tv</text>
    </Tile>
  )],
  ['Music', false, (
    <Tile bg="#fb3b57">
      <path d="M18 34V14l17-4v20" stroke="#fff" strokeWidth="3" fill="none" />
      <path d="M18 14l17-4v5l-17 4z" fill="#fff" />
      <ellipse cx="14" cy="35" rx="5" ry="4" fill="#fff" />
      <ellipse cx="31" cy="31" rx="5" ry="4" fill="#fff" />
    </Tile>
  )],
  ['Keynote', false, (
    <Tile bg="#1f93f5">
      <path d="M12 9h24l4 14H8zM23 23h2v16h-2zM16 39h16v2H16z" fill="#eef7ff" />
      <circle cx="22" cy="12" r="3" fill="#f3524a" />
      <circle cx="27" cy="12" r="3" fill="#f7c52f" />
      <circle cx="24" cy="16" r="3" fill="#4fb765" />
    </Tile>
  )],
  ['Numbers', false, (
    <Tile bg="#3bd63c">
      <path d="M9 31h5v9H9zM17 23h5v17h-5zM25 15h5v25h-5zM33 8h5v32h-5z" fill="#fff" />
    </Tile>
  )],
  ['Pages', false, (
    <Tile bg="#fb9d23">
      <path d="M39 8 17 34l-7 6 4-8L36 6z" fill="#fff" />
      <path d="M18 40h22" stroke="#fff" strokeWidth="2" />
    </Tile>
  )],
  ['App Store', false, (
    <Tile bg="#1f93f5">
      <path d="M26 10 13 36M22 10l14 26M8 30h20M33 30h7" stroke="#fff" strokeWidth="4" strokeLinecap="round" />
    </Tile>
  )],
  ['System Settings', false, (
    <Tile bg="#85888b">
      <circle cx="24" cy="24" r="19" fill="#b8b8b8" stroke="#333" strokeWidth="3" strokeDasharray="2 1" />
      <circle cx="24" cy="24" r="14" fill="#888" stroke="#333" strokeWidth="3" />
      <path d="M24 24h14M24 24l-8-12M24 24l-8 12" stroke="#333" strokeWidth="3" />
      <circle cx="24" cy="24" r="4" fill="#999" stroke="#333" strokeWidth="2" />
    </Tile>
  ), '1'],
  null,
  ['Excel', true, (
    <Tile bg="#fafafa">
      <path d="M16 10h24v28H16z" fill="#2ea869" />
      <path d="M28 10h12v9H28z" fill="#38c481" />
      <path d="M16 24h24v14H16z" fill="#1a7f49" />
      <rect x="6" y="16" width="17" height="17" rx="2" fill="#117a41" />
      <path d="m11 20 7 9M18 20l-7 9" stroke="#fff" strokeWidth="2" />
    </Tile>
  )],
  ['Image Capture', true, (
    <svg viewBox="0 0 48 48" className="size-[30px]">
      <rect width="48" height="48" rx="5" fill="#1b349f" />
      <path d="M15 8h18l2 17H13zM12 27h24l4 6v9H8v-9z" fill="#f1f4fb" />
      <path d="M12 33h24" stroke="#9aa9d5" strokeWidth="1.500" />
    </svg>
  )],
  ['Preview', true, (
    <Tile bg="#f4f4f4">
      <path d="M3 5h42v15H3z" fill="#a6cbee" />
      <path d="M3 20h42v7H3z" fill="#2c5c94" />
      <path d="M3 27h42v14H3z" fill="#dcc7a5" />
      <path d="M28 22h14v9H28z" fill="#222" />
      <rect x="24" y="30" width="22" height="16" rx="3" fill="#444" />
      <ellipse cx="35" cy="37" rx="8" ry="5" fill="#ddd" />
    </Tile>
  )],
  ['Canva', true, (
    <svg viewBox="0 0 48 48" className="size-[25px]">
      <defs>
        <linearGradient id="canva" x1="0" y1="0" x2="1" y2="1">
          <stop offset="0.2" stopColor="#10c4cc" />
          <stop offset="0.9" stopColor="#7a2bea" />
        </linearGradient>
      </defs>
      <rect width="48" height="48" rx="10" fill="url(#canva)" />
      <text x="24" y="29" textAnchor="middle" fontSize="13" fontStyle="italic" fontWeight="700" fill="#fff">Canva</text>
    </svg>
  )],
  null,
  ['Documents', false, (
    <svg viewBox="0 0 44 56" className="h-[29px] w-[23px]">
      <path d="M22 1h14l6 6v38H22z" fill="#f2f7fc" stroke="#bbb" />
      <path d="M2 2h22l6 6v46H2z" fill="#fafafa" stroke="#bbb" />
      <path d="M6 8h9v4H6z" fill="#3b7bd0" />
      <path d="M4 20h38v4H4z" fill="#26488c" />
      <path d="M5 30h23M5 36h23M5 42h23M5 48h23M12 27v25M20 27v25" stroke="#c8c8c8" />
    </svg>
  )],
  ['Bin', false, (
    <svg viewBox="0 0 44 56" className="h-[29px] w-[23px]">
      <path d="M3 10h38l-5 42c-6 4-22 4-28 0z" fill="#dfe2e2" stroke="#f6f6f6" />
      <path d="M12 20l3 30M22 20v32M32 20l-3 30M7 30l28 16M37 30 9 46" stroke="#c4c8c8" strokeWidth="1.500" />
      <ellipse cx="22" cy="10" rx="19" ry="7" fill="#f4f4f4" />
      <path d="m8 8 7-5 5 5 6-6 5 6 6 1-7 6-9-2-8 2z" fill="#e9e4dc" stroke="#666" />
      <path d="M13 9h4v3h-4z" fill="#d76b3c" />
      <path d="M26 8h4v3h-4z" fill="#3b7bd0" />
    </svg>
  )],
];

const Dock = () => (
  <div className="flex h-[39px] shrink-0 justify-center">
    <div className="flex h-[37px] w-fit rounded-lg border border-[#d2d2cf] bg-[#bebebc] pl-[2px] shadow-sm">
      {DOCK.map((item, i) => {
        if (!item) return <span key={i} className="mx-[7px] my-[5px] w-px bg-[#999]" />;
        const [name, running, icon, badge] = item;
        return (
          <button key={name} aria-label={name} className="relative flex w-8 flex-col items-center">
            <span className="flex h-[33px] items-center">{icon}</span>
            {running && <span className="size-[2px] rounded-full bg-[#333]" />}
            {badge && (
              <span className="absolute top-px right-0 flex size-[11px] items-center justify-center rounded-full bg-[#f4453e] text-[7px] text-white">{badge}</span>
            )}
          </button>
        );
      })}
    </div>
  </div>
);

const App = () => {
  const [active, setActive] = useState('Dieseltenk Template');

  return (
    <div className="relative flex h-screen flex-col overflow-hidden bg-linear-to-r from-[#a3a3a3] via-[#b2b2ae] to-[#a09e9a] font-[Inter,'Liberation_Sans',sans-serif]">
      <MenuBar />
      <main className="flex min-h-0 flex-1 flex-col overflow-hidden rounded-b-md bg-[#f5f5f5]">
        <TitleBar />
        <TabsRow />
        <Ribbon />
        <FormulaBar />
        <Sheet />
        <SheetTabs active={active} onSelect={setActive} />
        <StatusBar />
      </main>
      <Dock />
      {/* window parked at the screen edge */}
      <div className="absolute right-0 bottom-[46px] h-[58px] w-[5px] rounded-l-[1px] border border-[#ddd] bg-white pt-px shadow-md">
        <div className="h-px bg-[#7b9bd0]" />
        <div className="mt-[9px] h-px bg-[#aaa]" />
        <div className="mt-px h-[3px] bg-[#aaa]" />
        <div className="h-[10px] bg-[#e0e0e0]" />
        <div className="mt-6 h-1 bg-[#aaa]" />
      </div>
    </div>
  );
};

export default App;
